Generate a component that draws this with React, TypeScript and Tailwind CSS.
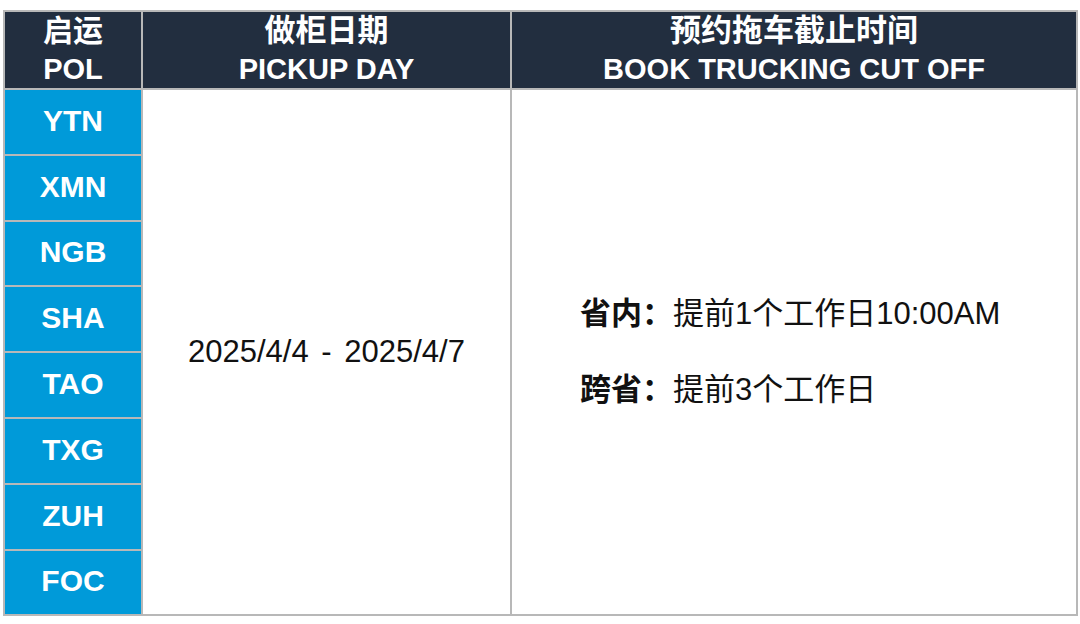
import React from 'react'

const ports = ['YTN', 'XMN', 'NGB', 'SHA', 'TAO', 'TXG', 'ZUH', 'FOC']

const font = { fontFamily: '"Liberation Sans", "Noto Sans CJK SC", sans-serif' }

export default function App() {
  return (
    <div className="w-[1080px] h-[624px] bg-white pt-[10px] pl-[3px]" style={font}>
      <table className="border-collapse table-fixed w-[1073px]">
        <colgroup>
          <col className="w-[138px]" />
          <col className="w-[369px]" />
          <col className="w-[566px]" />
        </colgroup>
        <thead>
          <tr className="h-[77px] bg-[#222e3f] text-white text-[29px] leading-[38px] font-bold">
            <th className="border-2 border-[#b8b8b8] text-center">
              <div className="text-[30px]">启运</div>
              <div>POL</div>
            </th>
            <th className="border-2 border-[#b8b8b8] text-center">
              <div className="text-[31px]">做柜日期</div>
              <div>PICKUP DAY</div>
            </th>
            <th className="border-2 border-[#b8b8b8] text-center">
              <div className="text-[31px]">预约拖车截止时间</div>
              <div>BOOK TRUCKING CUT OFF</div>
            </th>
          </tr>
        </thead>
        <tbody>
          {ports.map((p, i) => (
            <tr key={p} className="h-[65.8px]">
              <td className="border-2 border-[#b8b8b8] bg-[#009ad9] text-white text-center text-[30px] font-bold pb-[3px]">
                {p}
              </td>
              {i === 0 && (
                <>
                  <td rowSpan={8} className="border-2 border-[#b8b8b8] text-center text-[31px] text-[#111]">
                    2025/4/4 <span className="px-[4px]">-</span> 2025/4/7
                  </td>
                  <td rowSpan={8} className="border-2 border-[#b8b8b8] align-middle text-[31px] leading-[36px] text-[#111]">
                    <div className="flex flex-col gap-[40px] pl-[68px]">
                      <div>
                        <span className="font-bold">省内：</span>提前1个工作日10:00AM
                      </div>
                      <div>
                        <span className="font-bold">跨省：</span>提前3个工作日
                      </div>
                    </div>
                  </td>
                </>
              )}
            </tr>
          ))}
        </tbody>
      </table>
    </div>
  )
}
